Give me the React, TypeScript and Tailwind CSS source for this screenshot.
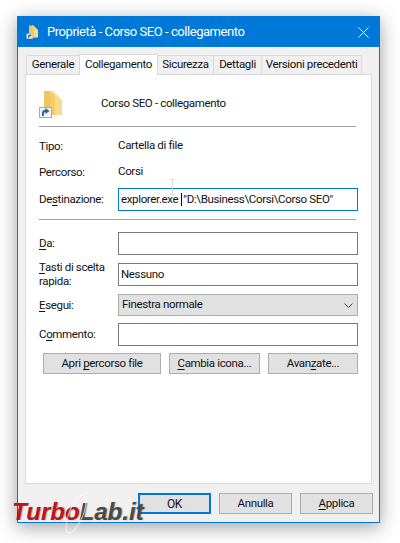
const F = "font-['Roboto','Noto_Sans',sans-serif]";

function Folder({ size }: { size: number }) {
  return (
    <svg width={size} height={size} viewBox="0 0 28 28" className="block">
      <path d="M6 1h9v24H6z" fill="#f0c75e" />
      <path d="M12 1h3l9 9v15H12z" fill="#f8dc8e" />
      <path d="M12 1l5 5v19h-5z" fill="#f3cd68" />
      <rect x="1.500" y="17.500" width="12" height="10" fill="#f4f4f4" stroke="#a9a9a9" />
      <path d="M4 26v-2.500c0-2.500 1.200-3.800 3.500-3.800V18l4 3-4 3v-2c-1.200 0-1.700.8-1.700 4z" fill="#2a5f9e" />
    </svg>
  );
}

function U({ children }: { children: string }) {
  return <span className="underline underline-offset-2 decoration-1">{children}</span>;
}

function Row({ label, h, mt, children }: { label: React.ReactNode; h: string; mt: string; children: React.ReactNode }) {
  return (
    <div className={`flex items-center ${h} ${mt}`}>
      <div className="w-[79px] shrink-0 leading-[14px] pb-px">{label}</div>
      <div className="w-[240px] h-full">{children}</div>
    </div>
  );
}

function Input({ children, focus }: { children?: React.ReactNode; focus?: boolean }) {
  return (
    <div className={`h-full border ${focus ? "border-[#0078d7]" : "border-[#7a7a7a]"} bg-white flex items-center px-[2px] whitespace-nowrap`}>
      {children}
    </div>
  );
}

function Btn({ w, children, def }: { w: string; children: React.ReactNode; def?: boolean }) {
  return (
    <div className={`${w} h-[21px] flex items-center justify-center bg-[#e1e1e1] ${def ? "border-2 border-[#0078d7]" : "border border-[#adadad]"}`}>
      {children}
    </div>
  );
}

function Tab({ w, children, active }: { w: string; children: string; active?: boolean }) {
  return (
    <div
      className={
        active
          ? `${w} h-[21px] -mb-px relative z-10 flex items-center justify-center whitespace-nowrap bg-white border border-b-0 border-[#d9d9d9]`
          : `${w} h-[19px] flex items-center justify-center whitespace-nowrap bg-[#f0f0f0] border border-b-0 border-[#d9d9d9] -ml-px first:ml-0`
      }
    >
      {children}
    </div>
  );
}

export default function App() {
  return (
    <div className={`${F} relative w-[400px] h-[543px] bg-white overflow-hidden text-[11.5px] tracking-[-0.35px] text-[#111]`}>
      <div className="absolute left-[17px] top-[16px] w-[363px] h-[507px] bg-[#f0f0f0] border border-[#0078d7] shadow-[0_4px_18px_rgba(0,0,0,0.38)] flex flex-col">
        <div className="h-[30px] bg-[#0078d7] text-white flex items-center pl-[8px] shrink-0">
          <Folder size={14} />
          <span className="ml-[7px] text-[13px] tracking-[-0.45px]">Proprietà - Corso SEO - collegamento</span>
          <svg width="11" height="11" viewBox="0 0 11 11" className="ml-auto mr-[10px]">
            <path d="M.5.500l10 10M10.500.500l-10 10" stroke="#fff" strokeWidth="1" fill="none" />
          </svg>
        </div>
        <div className="px-[7px] pt-[7px] flex-1 flex flex-col">
          <div className="flex items-end pl-[1px] h-[20px] shrink-0">
            <Tab w="w-[54px]">Generale</Tab>
            <Tab w="w-[79px] -ml-px" active>Collegamento</Tab>
            <Tab w="w-[57px]">Sicurezza</Tab>
            <Tab w="w-[49px]">Dettagli</Tab>
            <Tab w="w-[101px]">Versioni precedenti</Tab>
          </div>
          <div className="w-[347px] h-[410px] bg-white border border-[#d9d9d9] px-[13px] pt-[15px] shrink-0">
            <div className="flex items-center h-[28px]">
              <div className="w-[63px] -ml-[1px]"><Folder size={28} /></div>
              <span>Corso SEO - collegamento</span>
            </div>
            <div className="h-px bg-[#a0a0a0] mt-[8px] w-[317px]" />
            <Row label="Tipo:" h="h-[16px]" mt="mt-[11px]"><span className="flex items-center h-full">Cartella di file</span></Row>
            <Row label="Percorso:" h="h-[16px]" mt="mt-[10px]"><span className="flex items-center h-full">Corsi</span></Row>
            <Row label={<>De<U>s</U>tinazione:</>} h="h-[23px]" mt="mt-[8px]">
              <Input focus>
                <span>explorer.exe </span>
                <span className="inline-block w-px h-[13px] bg-black ml-[3px] mr-px" />
                <span>"D:\Business\Corsi\Corso SEO"</span>
              </Input>
            </Row>
            <div className="h-px bg-[#a0a0a0] mt-[8px] w-[317px]" />
            <Row label={<><U>D</U>a:</>} h="h-[23px]" mt="mt-[12px]"><Input /></Row>
            <Row label={<><U>T</U>asti di scelta<br />rapida:</>} h="h-[23px]" mt="mt-[8px]"><Input>Nessuno</Input></Row>
            <Row label={<><U>E</U>segui:</>} h="h-[22px]" mt="mt-[8px]">
              <div className="h-full bg-[#e1e1e1] border border-[#adadad] flex items-center pl-[3px] pr-[4px] justify-between">
                <span>Finestra normale</span>
                <svg width="9" height="5" viewBox="0 0 9 5"><path d="M.5.500L4.500 4.500l4-4" stroke="#444" fill="none" /></svg>
              </div>
            </Row>
            <Row label={<>C<U>o</U>mmento:</>} h="h-[23px]" mt="mt-[7px]"><Input /></Row>
            <div className="flex mt-[7px] pl-[4px] gap-[8px]">
              <Btn w="w-[118px]"><span>Apri <U>p</U>ercorso file</span></Btn>
              <Btn w="w-[91px]"><span><U>C</U>ambia icona...</span></Btn>
              <Btn w="w-[90px]"><span>Avan<U>z</U>ate...</span></Btn>
            </div>
          </div>
          <div className="flex justify-end gap-[8px] mt-[9px] -mr-px">
            <Btn w="w-[73px]" def><span className="text-[12px]">OK</span></Btn>
            <Btn w="w-[73px]">Annulla</Btn>
            <Btn w="w-[73px]"><span><U>A</U>pplica</span></Btn>
          </div>
        </div>
      </div>
      <svg width="7" height="16" viewBox="0 0 7 16" className="absolute left-[169px] top-[179px]">
        <path d="M1 .5h5M3.500.500v15M1 15.500h5" stroke="#d8d8d8" fill="none" />
      </svg>
      <div className="absolute left-[12px] top-[498px] text-[24px] leading-[28px] font-bold italic tracking-[0px] font-['Liberation_Sans',sans-serif] [text-shadow:1px_0_1px_rgba(0,0,0,0.35)]">
        <span className="text-[#c0131b]">Turbo</span><span className="text-[#4a4a4a]">Lab.it</span>
      </div>
      <svg width="32" height="40" viewBox="0 0 32 40" className="absolute left-[60px] top-[494px]">
        <ellipse cx="16" cy="20" rx="7" ry="20" transform="rotate(22 16 20)" stroke="#fff" strokeOpacity="0.7" fill="none" />
      </svg>
    </div>
  );
}
